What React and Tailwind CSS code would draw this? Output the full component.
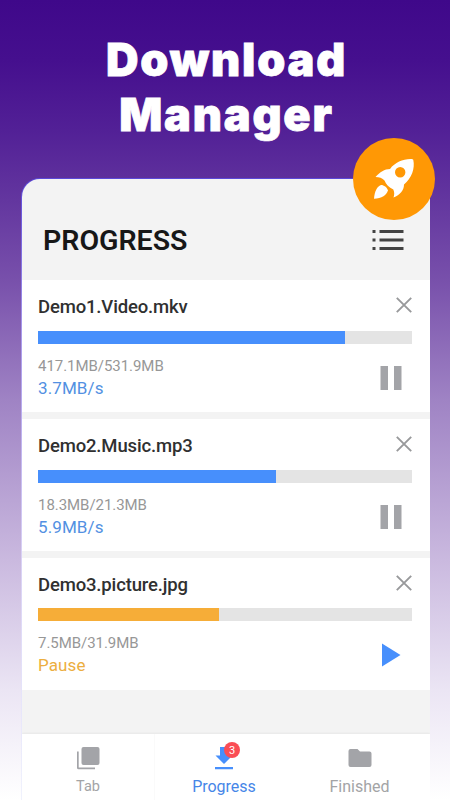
import React from 'react';
import clsx from 'clsx';

const downloads = [
    { name: 'Demo1.Video.mkv', size: '417.1MB/531.9MB', status: '3.7MB/s', percent: 82, paused: false },
    { name: 'Demo2.Music.mp3', size: '18.3MB/21.3MB', status: '5.9MB/s', percent: 63.7, paused: false },
    { name: 'Demo3.picture.jpg', size: '7.5MB/31.9MB', status: 'Pause', percent: 48.5, paused: true },
];

const RocketBadge = () => (
    <div className="absolute -top-[40px] -right-[5px] z-10 h-[82px] w-[82px] rounded-full bg-[#ff9805]">
        <svg viewBox="0 0 82 82" className="h-full w-full" fill="#fff">
            <path
                fillRule="evenodd"
                d="M59.500 21.200C51 20.500 42.500 24 37 31C31.500 31 27 34 22.500 39C26 39 29.500 40 31.500 42.500C33 46.500 36 49.500 40.300 51.500C41.500 54 41.500 57 40.500 59.500C47 57 51 52.500 51 46.500C58.500 40.500 62.200 30.500 60.300 22Q60.200 21.300 59.500 21.200ZM47.200 29a5.200 5.200 0 1 1 0 10.400a5.200 5.200 0 1 1 0-10.400Z"
            />
            <path d="M28 47C24 48.500 21.500 53.500 21 60.800C28.500 60.200 34 57 34.900 52.200C34 49.500 31 47 28 47Z" />
        </svg>
    </div>
);

const ListIcon = () => (
    <svg viewBox="0 0 32 22" className="h-[22px] w-8" fill="#424242">
        <path d="M0.500 1h3v3h-3zM7.500 1h24v3h-24zM0.500 9.500h3v3h-3zM7.500 9.500h24v3h-24zM0.500 18h3v3h-3zM7.500 18h24v3h-24z" />
    </svg>
);

const CloseIcon = () => (
    <svg viewBox="0 0 18 18" className="h-[18px] w-[18px]" fill="none" stroke="#98999b" strokeWidth="1.9">
        <path d="M1.800 1.800l14.400 14.400M16.200 1.800L1.800 16.200" />
    </svg>
);

const ActionIcon = ({ paused }) => (
    <svg viewBox="0 0 22 24" className="h-6 w-[22px]">
        {paused ? <path fill="#478ffc" d="M2 0.500L20.500 12L2 23.500z" /> : <path fill="#a3a4a8" d="M0.500 0h7.500v24h-7.500zM14 0h7.500v24h-7.500z" />}
    </svg>
);

const DownloadRow = ({ item }) => (
    <div className="h-[132px] bg-white pl-4 pr-[18px] pt-4">
        <div className={clsx('-mr-px flex items-start justify-between', item.paused ? 'h-[34px]' : 'h-[35px]')}>
            <span className="text-[18.500px] font-medium leading-[22px] tracking-[-0.15px] text-[#303030]">{item.name}</span>
            <CloseIcon />
        </div>
        <div className="h-[12.500px] bg-[#e4e4e4]">
            <div className={clsx('h-full', item.paused ? 'bg-[#f6ad38]' : 'bg-[#478ffc]')} style={{ width: `${item.percent}%` }} />
        </div>
        <div className="flex justify-between pr-[10px]">
            <div className="pt-[12.500px]">
                <p className="text-[15px] leading-5 tracking-[-0.05px] text-[#979797]">{item.size}</p>
                <p className={clsx('mt-px text-[17px] leading-[22px] tracking-[0.1px]', item.paused ? 'text-[#ecae40]' : 'text-[#5290e2]')}>{item.status}</p>
            </div>
            <div className="pt-[22px]">
                <ActionIcon paused={item.paused} />
            </div>
        </div>
    </div>
);

const BottomNav = () => (
    <nav className="grid h-[66px] grid-cols-[133px_138px_1fr] bg-white leading-5 text-[#a3a4a6] shadow-[0_-1px_2px_rgba(0,0,0,0.05)]">
        <div className="flex flex-col items-center border-r border-[#fafafa] pt-3">
            <svg viewBox="0 0 24 24" className="h-6 w-6" fill="#a3a4a8">
                <rect x="5.500" y="1" width="18" height="18" rx="2" />
                <path d="M1 5.500h1.700v16h16.300v1.800h-16.500a1.500 1.500 0 0 1-1.500-1.500z" />
            </svg>
            <span className="mt-[7px] text-[14.500px]">Tab</span>
        </div>
        <div className="flex flex-col items-center pt-3 text-[#4686e8]">
            <div className="relative">
                <svg viewBox="0 0 24 24" className="h-6 w-6" fill="#478ffc">
                    <path d="M8 1h8v8.500h4.500l-8.500 8.500l-8.500-8.500h4.500zM3 21h18v2.200h-18z" />
                </svg>
                <span className="absolute left-3 -top-1 flex h-4 w-4 items-center justify-center rounded-full bg-[#fa4d55] text-[11px] leading-none text-white">3</span>
            </div>
            <span className="mt-[7px] text-[16px]">Progress</span>
        </div>
        <div className="flex flex-col items-center pt-3 pr-[4px]">
            <svg viewBox="0 0 24 24" className="h-6 w-6" fill="#a3a4a8">
                <path d="M2.500 3h7l2.500 2.500h9.500a2 2 0 0 1 2 2v11.500a2 2 0 0 1-2 2h-19a2 2 0 0 1-2-2v-14a2 2 0 0 1 2-2z" />
            </svg>
            <span className="mt-[7px] text-[16px]">Finished</span>
        </div>
    </nav>
);

const App = () => {
    return (
        <div className="h-[800px] w-[450px] overflow-hidden bg-[linear-gradient(#3f088a_0px,#450f8e_60px,#522096_130px,#63369f_200px,#7850ab_280px,#9f83c4_400px,#cab9df_560px,#ebe5f4_690px,#ffffff_800px)] font-[Roboto,sans-serif]">
            <h1 className="h-[178px] pl-[3px] pt-[32px] text-center font-[Inter,sans-serif] text-[45px] font-black leading-[55px] tracking-[1.800px] text-white [-webkit-text-stroke:0.800px_white]">
                Download
                <br />
                Manager
            </h1>
            <div className="relative ml-[21px] h-[622px] w-[409px] rounded-tl-[19px] bg-[linear-gradient(#5a48d8,#a99aec_25%,#d8d0f5_60%,#f0f2fd)] pl-px pt-px">
                <RocketBadge />
                <div className="flex h-[621px] flex-col overflow-hidden rounded-tl-[18px] bg-[#f3f3f3]">
                    <header className="flex h-[101px] shrink-0 items-center justify-between pl-[21px] pr-[26px] pt-[21px]">
                        <h2 className="pt-[2px] text-[28.500px] font-semibold leading-8 text-[#171717]">PROGRESS</h2>
                        <ListIcon />
                    </header>
                    <main className="flex grow flex-col gap-[7px]">
                        {downloads.map((item) => (
                            <DownloadRow key={item.name} item={item} />
                        ))}
                    </main>
                    <BottomNav />
                </div>
            </div>
        </div>
    );
};

export default App;
